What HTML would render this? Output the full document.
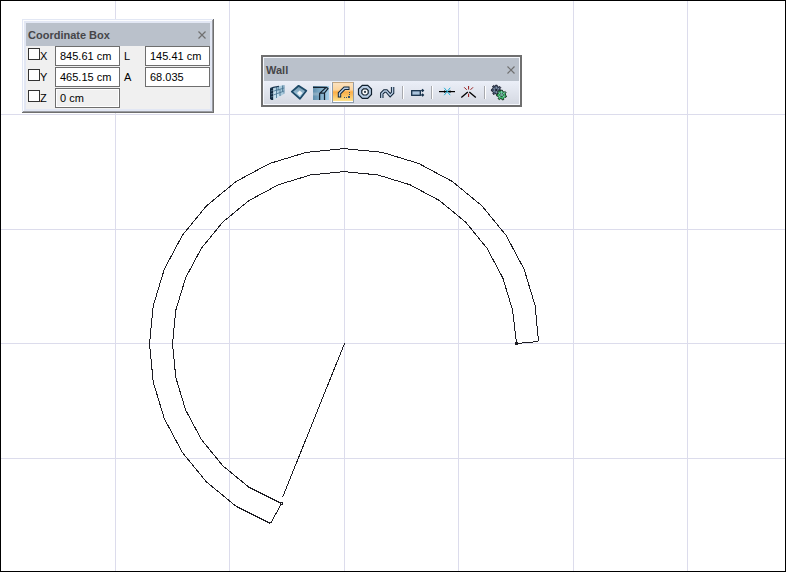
<!DOCTYPE html>
<html><head><meta charset="utf-8">
<style>
html,body{margin:0;padding:0;}
body{width:786px;height:572px;overflow:hidden;position:relative;background:#fff;font-family:"Liberation Sans",sans-serif;font-size:11px;color:#000;}
#frame{position:absolute;left:0;top:0;width:784px;height:570px;border:1px solid #000;}
svg{position:absolute;left:0;top:0;overflow:visible;}
.r{position:absolute;}
.ttl{position:absolute;font-weight:bold;color:#464649;line-height:13px;white-space:nowrap;}
.lbl{position:absolute;line-height:13px;white-space:nowrap;color:#000;}
.inp{position:absolute;box-sizing:border-box;width:65px;height:20px;border:1px solid #6e6e6e;background:#fff;}
.inp span{position:absolute;left:4px;top:3px;line-height:13px;white-space:nowrap;color:#000;}
.chk{position:absolute;box-sizing:border-box;width:12px;height:12px;border:1px solid #333;background:#fff;}
</style></head>
<body>
<svg width="786" height="572" viewBox="0 0 786 572">
  <g fill="#dcdcec" shape-rendering="crispEdges"><rect x="115" y="0" width="1" height="572"/><rect x="229" y="0" width="1" height="572"/><rect x="344" y="0" width="1" height="572"/><rect x="458" y="0" width="1" height="572"/><rect x="573" y="0" width="1" height="572"/><rect x="687" y="0" width="1" height="572"/><rect x="0" y="114" width="786" height="1"/><rect x="0" y="229" width="786" height="1"/><rect x="0" y="343" width="786" height="1"/><rect x="0" y="458" width="786" height="1"/></g>

  <g fill="none" stroke="#1c1c22" stroke-width="1" shape-rendering="crispEdges">
    <path d="M538.50 341.50 L535.16 305.80 L524.08 269.16 L506.09 235.40 L481.87 205.80 L452.37 181.51 L418.71 163.47 L382.18 152.35 L344.20 148.60 L306.22 152.35 L269.69 163.47 L236.03 181.51 L206.53 205.80 L182.31 235.40 L164.32 269.16 L153.24 305.80 L149.50 343.90 L153.24 382.00 L164.32 418.64 L182.31 452.40 L206.53 482.00 L236.03 506.29 L270.50 523.50"/>
    <path d="M516.50 343.50 L512.60 310.29 L502.83 277.96 L486.96 248.18 L465.61 222.07 L439.59 200.64 L409.91 184.72 L377.70 174.91 L344.20 171.60 L310.70 174.91 L278.49 184.72 L248.81 200.64 L222.79 222.07 L201.44 248.18 L185.57 277.96 L175.80 310.29 L172.50 343.90 L175.80 377.51 L185.57 409.84 L201.44 439.62 L222.79 465.73 L248.81 487.16 L281.50 503.50"/>
    <path d="M538.5 341.5 L516.5 343.5"/>
    <path d="M270.5 523.5 L281.5 503.5"/>
    <path d="M344.5 343.5 L282.5 497.5"/>
  </g>
  <g shape-rendering="crispEdges">
    <rect x="515" y="342" width="3" height="3" fill="#1c1c22"/>
    <rect x="280" y="502" width="3" height="3" fill="#1c1c22"/>
    <rect x="281" y="503" width="1" height="1" fill="#fff"/>
  </g>

</svg>
<div id="frame"></div>

<!-- Coordinate Box frame -->
<div class="r" style="left:22px;top:19px;width:192px;height:94px;background:#e2e7f4;"></div>
<div class="r" style="left:23px;top:20px;width:189px;height:1px;background:#fbfcfe;"></div>
<div class="r" style="left:23px;top:20px;width:1px;height:91px;background:#fbfcfe;"></div>
<div class="r" style="left:213px;top:19px;width:1px;height:94px;background:#6f6f6f;"></div>
<div class="r" style="left:212px;top:20px;width:1px;height:92px;background:#9a9ca2;"></div>
<div class="r" style="left:22px;top:112px;width:192px;height:1px;background:#6f6f6f;"></div>
<div class="r" style="left:23px;top:111px;width:190px;height:1px;background:#9a9ca2;"></div>
<div class="r" style="left:26px;top:23px;width:184px;height:23px;background:#bac1cb;"></div>
<div class="r" style="left:26px;top:46px;width:184px;height:63px;background:#f0f0f0;"></div>

<div class="ttl" style="left:28px;top:29px;">Coordinate Box</div>
<svg width="10" height="10" style="left:197px;top:30px;" viewBox="0 0 10 10"><path d="M1.5 1.5 L8.5 8.5 M8.5 1.5 L1.5 8.5" stroke="#707070" stroke-width="1.2" fill="none"/></svg>

<div class="chk" style="left:28px;top:48px;"></div>
<div class="lbl" style="left:40px;top:50px;">X</div>
<div class="inp" style="left:55px;top:46px;"><span>845.61 cm</span></div>
<div class="lbl" style="left:124px;top:50px;">L</div>
<div class="inp" style="left:145px;top:46px;"><span>145.41 cm</span></div>

<div class="chk" style="left:28px;top:69px;"></div>
<div class="lbl" style="left:40px;top:71px;">Y</div>
<div class="inp" style="left:55px;top:67px;"><span>465.15 cm</span></div>
<div class="lbl" style="left:124px;top:71px;">A</div>
<div class="inp" style="left:145px;top:67px;"><span>68.035</span></div>

<div class="chk" style="left:28px;top:90px;"></div>
<div class="lbl" style="left:40px;top:92px;">Z</div>
<div class="inp" style="left:55px;top:88px;background:#f0f0f0;box-shadow:inset 0 0 0 1px #fff;"><span>0 cm</span></div>

<!-- Wall toolbar -->
<div class="r" style="left:261px;top:55px;width:261px;height:52px;background:#6f6f6f;"></div>
<div class="r" style="left:263px;top:57px;width:257px;height:48px;background:#f6f8fd;"></div>
<div class="r" style="left:264px;top:58px;width:255px;height:23px;background:#bac1cb;"></div>
<div class="r" style="left:264px;top:81px;width:255px;height:23px;background:linear-gradient(#ebeff8,#d5d9e2);"></div>
<div class="ttl" style="left:266px;top:64px;">Wall</div>
<svg width="10" height="10" style="left:506px;top:65px;" viewBox="0 0 10 10"><path d="M1.5 1.5 L8.5 8.5 M8.5 1.5 L1.5 8.5" stroke="#707070" stroke-width="1.2" fill="none"/></svg>

<!-- selected button -->
<div class="r" style="left:332px;top:82px;width:22px;height:21px;box-sizing:border-box;border:1px solid #8e9cab;border-top-color:#c4a67e;background:linear-gradient(#fbe2c0 0%,#fdd59c 36%,#fbae46 47%,#fbbd5c 62%,#fee28c 94.5%,#fff 94.5%,#fff 100%);"></div>
<div class="r" style="left:331px;top:82px;width:1px;height:20px;background:#f4f6fb;"></div>
<svg width="786" height="120" viewBox="0 0 786 120">
  <defs>
    <linearGradient id="gb" x1="0" y1="0" x2="1" y2="1"><stop offset="0" stop-color="#1f3f58"/><stop offset="1" stop-color="#a9cfe6"/></linearGradient>
    <linearGradient id="gl" x1="0" y1="0" x2="1" y2="0"><stop offset="0" stop-color="#5f8eab"/><stop offset="1" stop-color="#a7d1ea"/></linearGradient>
    <linearGradient id="gd" x1="0" y1="0" x2="0" y2="1"><stop offset="0" stop-color="#6f93aa"/><stop offset="1" stop-color="#b5dcf3"/></linearGradient>
  </defs>
  <!-- 1 brick wall -->
  <path d="M270 88.6 L273.4 87.4 L273.4 100 L271.5 100 L270 99 Z" fill="#10283e"/>
  <path d="M270.8 91 L272.8 90.3 M270.8 94 L272.8 93.5 M270.8 97 L272.8 96.5" stroke="#6b8fa8" stroke-width="0.7"/>
  <path d="M273.4 87.4 L284.2 85 L284.2 93.8 L273.4 100 Z" fill="#c6e0ee"/>
  <path d="M273.4 87.4 L284.2 85 L284.2 93.8 L280 96.2 Z" fill="#9fc2d6" opacity="0.7"/>
  <path d="M273.4 91.2 L284.2 88 M273.4 95 L284.2 91 M276.5 87 L276.5 98 M280 89.5 L280 96 M282.5 85.5 L282.5 91.5 M278.2 86.2 L278.2 90.5" stroke="#44708e" stroke-width="0.8" fill="none"/>
  <path d="M270.2 88.6 L273.4 87.4 L279 86.2" stroke="#1a3650" stroke-width="1.1" fill="none"/>
  <path d="M284 85.2 L284 93.6" stroke="#5a86a2" stroke-width="0.8"/>
  <!-- 2 diamond -->
  <path d="M298.6 85.8 L306.3 90.8 L300 98.8 L291.8 91.6 Z" fill="url(#gd)" stroke="#1d4a68" stroke-width="1.8" stroke-linejoin="round"/>
  <path d="M299.7 90.5 L302.5 93 L299.8 95.8 L297 93 Z" fill="#eef4f8"/>
  <!-- 3 wall corner -->
  <rect x="313" y="86" width="16" height="14" fill="url(#gl)"/>
  <rect x="313" y="92.5" width="6" height="3" fill="#9fb8c8" opacity="0.6"/>
  <path d="M313 87.3 L326.3 87.3 L328 88.6 L324.5 92.8 L324.5 100 M326.3 87.3 L319.6 93.4 L319.6 100 M319.6 93.2 L324.5 92.8" stroke="#15222f" stroke-width="1.25" fill="none" stroke-linejoin="round"/>
  <!-- 4 arc (selected) -->
  <path d="M339.5 97.5 L339.5 93.2 L344.5 88.2 L349.5 88.2" stroke="#0f2438" stroke-width="3.4" fill="none" stroke-linejoin="miter"/>
  <path d="M339.5 96.6 L339.5 93.2 L344.5 88.2 L348.6 88.2" stroke="#b9cde4" stroke-width="1.4" fill="none" stroke-linejoin="miter"/>
  <g fill="#35506e" shape-rendering="crispEdges"><rect x="349" y="92" width="1" height="1"/><rect x="349" y="94" width="1" height="1"/><rect x="348" y="96" width="2" height="2"/><rect x="346" y="97" width="1" height="1"/><rect x="344" y="97" width="1" height="1"/></g>
  <!-- 5 circle -->
  <path d="M362.3 85.3 L367.7 85.3 L371.5 89.1 L371.5 94.5 L367.7 98.3 L362.3 98.3 L358.5 94.5 L358.5 89.1 Z" fill="#b6cbe2" stroke="#10202e" stroke-width="1.2"/>
  <path d="M363.5 88.8 L366.5 88.8 L368.2 90.5 L368.2 93.3 L366.5 95 L363.5 95 L361.8 93.3 L361.8 90.5 Z" fill="#fff" stroke="#10202e" stroke-width="1.2"/>
  <path d="M365 90.8 L365 93 M363.9 91.9 L366.1 91.9" stroke="#10202e" stroke-width="1"/>
  <!-- 6 wave -->
  <path d="M381.8 98 L381.8 93.5 L384.3 91 L386.5 91 L390.2 95.2 L392.6 92.8 L392.6 87" stroke="#0f2438" stroke-width="3.4" fill="none" stroke-linejoin="miter"/>
  <path d="M381.8 98 L381.8 93.5 L384.3 91 L386.5 91 L390.2 95.2 L392.6 92.8 L392.6 87" stroke="#b9cde4" stroke-width="1.4" fill="none" stroke-linejoin="miter"/>
  <!-- separators -->
  <g shape-rendering="crispEdges">
    <rect x="402" y="86" width="1" height="13" fill="#a7a9ae"/><rect x="403" y="86" width="1" height="13" fill="#fff"/>
    <rect x="431" y="86" width="1" height="13" fill="#a7a9ae"/><rect x="432" y="86" width="1" height="13" fill="#fff"/>
    <rect x="484" y="86" width="1" height="13" fill="#a7a9ae"/><rect x="485" y="86" width="1" height="13" fill="#fff"/>
  </g>
  <!-- 7 rect -->
  <rect x="411.7" y="90.7" width="8.6" height="4.6" fill="#aac3dc" stroke="#15304a" stroke-width="1.3"/>
  <path d="M422.6 88.8 L424.3 90.5 L422.6 92.2 L420.9 90.5 Z M422.6 93.3 L424.3 95 L422.6 96.7 L420.9 95 Z" fill="#15304a"/>
  <!-- 8 -+- -->
  <path d="M439 91.6 L455 91.6" stroke="#000" stroke-width="1.2"/>
  <path d="M444.2 87.8 L450.2 95.2 M450.2 87.8 L444.2 95.2" stroke="#22aed4" stroke-width="1"/>
  <path d="M444 90.2 L446.6 91.6 L444 93 Z M450.5 90.2 L447.9 91.6 L450.5 93 Z" fill="#000"/>
  <!-- 9 extend -->
  <path d="M461.3 97.5 L467.8 91.9 M469.3 91.9 L475.8 97.5" stroke="#000" stroke-width="1.3"/>
  <path d="M468.6 86 L468.6 89.5 M468.6 93.6 L468.6 97 M464.2 87.3 L466.7 89.8 M473 87.3 L470.5 89.8" stroke="#941616" stroke-width="1"/>
  <!-- 10 gears -->
  <g transform="translate(496.3 90) scale(0.82)">
    <path d="M-1 -5.8 L1 -5.8 L1.4 -4.2 L3.2 -3.4 L4.3 -4.3 L5.4 -3 L4.4 -1.5 L4.9 0.5 L6 1.2 L5.3 2.8 L3.8 2.7 L2.5 4.1 L2.6 5.6 L0.9 6 L0.1 4.6 L-1.7 4.5 L-2.8 5.6 L-4.2 4.5 L-3.7 3 L-4.7 1.4 L-6 1.1 L-5.9 -0.8 L-4.4 -1.3 L-3.9 -3 L-4.6 -4.4 L-3.1 -5.4 L-1.8 -4.4 Z" fill="#42526a" stroke="#161c2c" stroke-width="1.2"/>
    <path d="M-3.5 -2 L3.5 2 M-3.5 2 L3.5 -2 M0 -4 L0 4" stroke="#a9bccf" stroke-width="1"/>
    <circle r="1.6" fill="#1d2638"/>
  </g>
  <g transform="translate(501.6 95) scale(0.82)">
    <path d="M-1 -5.8 L1 -5.8 L1.4 -4.2 L3.2 -3.4 L4.3 -4.3 L5.4 -3 L4.4 -1.5 L4.9 0.5 L6 1.2 L5.3 2.8 L3.8 2.7 L2.5 4.1 L2.6 5.6 L0.9 6 L0.1 4.6 L-1.7 4.5 L-2.8 5.6 L-4.2 4.5 L-3.7 3 L-4.7 1.4 L-6 1.1 L-5.9 -0.8 L-4.4 -1.3 L-3.9 -3 L-4.6 -4.4 L-3.1 -5.4 L-1.8 -4.4 Z" fill="#3fbf6e" stroke="#0f2a18" stroke-width="1.2"/>
    <circle r="2.6" fill="#205a36"/>
    <path d="M-4 -3 L4 3 M-4 3 L4 -3 M0 -5 L0 -1" stroke="#9fd0d8" stroke-width="0.9"/>
  </g>
</svg>

</body></html>
